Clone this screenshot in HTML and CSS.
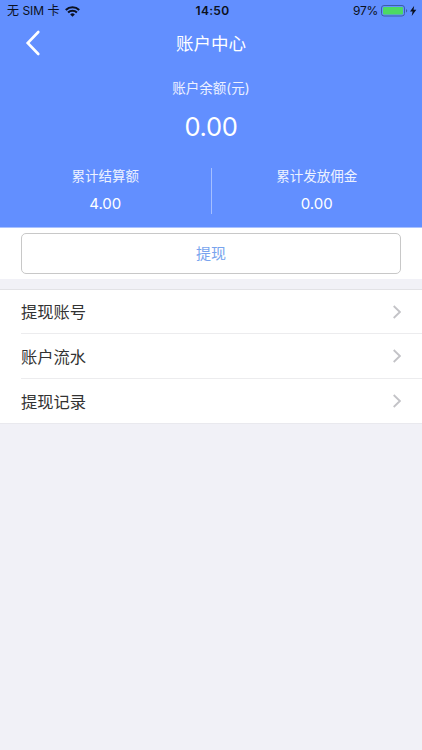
FILE: index.html
```html
<!DOCTYPE html>
<html lang="zh-CN">
	<head>
		<meta charset="utf-8"/>
		<title>账户中心</title>
		<link rel="stylesheet" href="styles.css">
	</head>
	<body>
		<header>
			<div class="status">
				<div class="carrier">
					<span>无 SIM 卡</span>
					<svg class="wifi" width="15" height="11" viewBox="0 0 15 11">
						<path d="M.8 4a9.6 9.6 0 0 1 13.4 0M3.1 6.5a6.3 6.3 0 0 1 8.8 0" fill="none" stroke="#0b1020" stroke-width="2.1"/>
						<path d="M5.2 8.4a3.3 3.3 0 0 1 4.6 0L7.5 10.8z" fill="#0b1020"/>
					</svg>
				</div>
				<div class="time">14:50</div>
				<div class="power">
					<span>97%</span>
					<svg width="36" height="12" viewBox="0 0 36 12">
						<rect x=".5" y=".5" width="23" height="10.5" rx="2.5" fill="none" stroke="#3d5fa8"/>
						<rect x="2" y="2" width="20" height="7.5" rx="1" fill="#4cd964"/>
						<path d="M25 4v3.6q1.2-.5 1.2-1.8T25 4z" fill="#3d5fa8"/>
						<path d="M33.2.8 29 6.6h2.6l-.9 4.3 4.6-6.2h-2.8z" fill="#0b1020"/>
					</svg>
				</div>
			</div>
			<div class="nav">
				<svg class="back" width="16" height="26" viewBox="0 0 16 26">
					<path d="M13.3 2 2.7 13l10.6 11" fill="none" stroke="#fff" stroke-width="2.6" stroke-linecap="round"/>
				</svg>
				<h1>账户中心</h1>
			</div>
			<div class="balance">
				<div class="label">账户余额(元)</div>
				<div class="total">0.00</div>
			</div>
			<div class="stats">
				<div class="stat">
					<div class="label">累计结算额</div>
					<div class="amount">4.00</div>
				</div>
				<div class="stat">
					<div class="label">累计发放佣金</div>
					<div class="amount">0.00</div>
				</div>
			</div>
		</header>
		<div class="action">
			<button class="withdraw">提现</button>
		</div>
		<div class="menu">
			<a class="row">
				<span>提现账号</span>
				<svg width="9" height="14" viewBox="0 0 9 14"><path d="M1.7 1 7.9 7 1.7 13" fill="none" stroke="#c3c3c7" stroke-width="1.8"/></svg>
			</a>
			<a class="row">
				<span>账户流水</span>
				<svg width="9" height="14" viewBox="0 0 9 14"><path d="M1.7 1 7.9 7 1.7 13" fill="none" stroke="#c3c3c7" stroke-width="1.8"/></svg>
			</a>
			<a class="row">
				<span>提现记录</span>
				<svg width="9" height="14" viewBox="0 0 9 14"><path d="M1.7 1 7.9 7 1.7 13" fill="none" stroke="#c3c3c7" stroke-width="1.8"/></svg>
			</a>
		</div>
	</body>
</html>
```
FILE: styles.css
```css
* {
	box-sizing: border-box;
}
body {
	margin: 0;
	min-height: 750px;
	background: #f1f1f7;
	color: #333;
	font-family: Inter, "Noto Sans CJK SC", sans-serif;
}
header {
	height: 228px;
	background: #628fff;
	border-bottom: 1px solid #a9c2ff;
	color: #fff;
}
.status {
	display: grid;
	grid-template-columns: 1fr auto 1fr;
	height: 22px;
	padding: 0 5px 0 7px;
	line-height: 22px;
	font-size: 12px;
	color: #0b1020;
}
.carrier, .power {
	display: flex;
	align-items: center;
}
.carrier {
	gap: 5px;
}
.power {
	justify-content: flex-end;
	gap: 3px;
	letter-spacing: -0.3px;
}
.time {
	padding-left: 1px;
	font-weight: 600;
	letter-spacing: 0.3px;
}
.nav {
	display: grid;
	grid-template-columns: 60px 1fr 60px;
	align-items: center;
	height: 43px;
}
.back {
	margin: 0 0 1px 25px;
}
h1 {
	margin: 0;
	font-size: 17.5px;
	font-weight: 400;
	line-height: 26px;
	text-align: center;
}
.balance {
	height: 103px;
	padding-top: 13px;
	text-align: center;
}
.label {
	font-size: 13.5px;
	line-height: 20px;
	color: #edf2ff;
}
.balance .label {
	line-height: 21px;
}
.total {
	margin-top: 10px;
	font-size: 25.5px;
	line-height: 36px;
	letter-spacing: -0.3px;
}
.stats {
	display: flex;
	height: 46px;
}
.stat {
	flex: 1;
	text-align: center;
}
.stat:first-child {
	border-right: 1px solid #a5bfff;
}
.stat .label {
	line-height: 16px;
}
.amount {
	margin-top: 9px;
	font-size: 15px;
	line-height: 22px;
}
.action {
	height: 51px;
	padding: 5px 21px;
	background: #fff;
}
.withdraw {
	display: block;
	width: 100%;
	height: 41px;
	padding: 0 0 2px;
	border: 1px solid #c8c8c8;
	border-radius: 5px;
	background: #fff;
	color: #78a4ee;
	font-family: inherit;
	font-size: 15px;
}
.menu {
	margin-top: 10px;
	border-top: 1px solid #e2e2e6;
	border-bottom: 1px solid #e9e9ee;
	background: #fff;
}
.row {
	display: flex;
	align-items: center;
	justify-content: space-between;
	height: 43px;
	margin-left: 21px;
	padding-right: 21px;
	font-size: 16.3px;
	line-height: 24px;
}
.row span {
	padding-top: 1px;
}
.row + .row {
	height: 45px;
	border-top: 1px solid #ececee;
}
```
